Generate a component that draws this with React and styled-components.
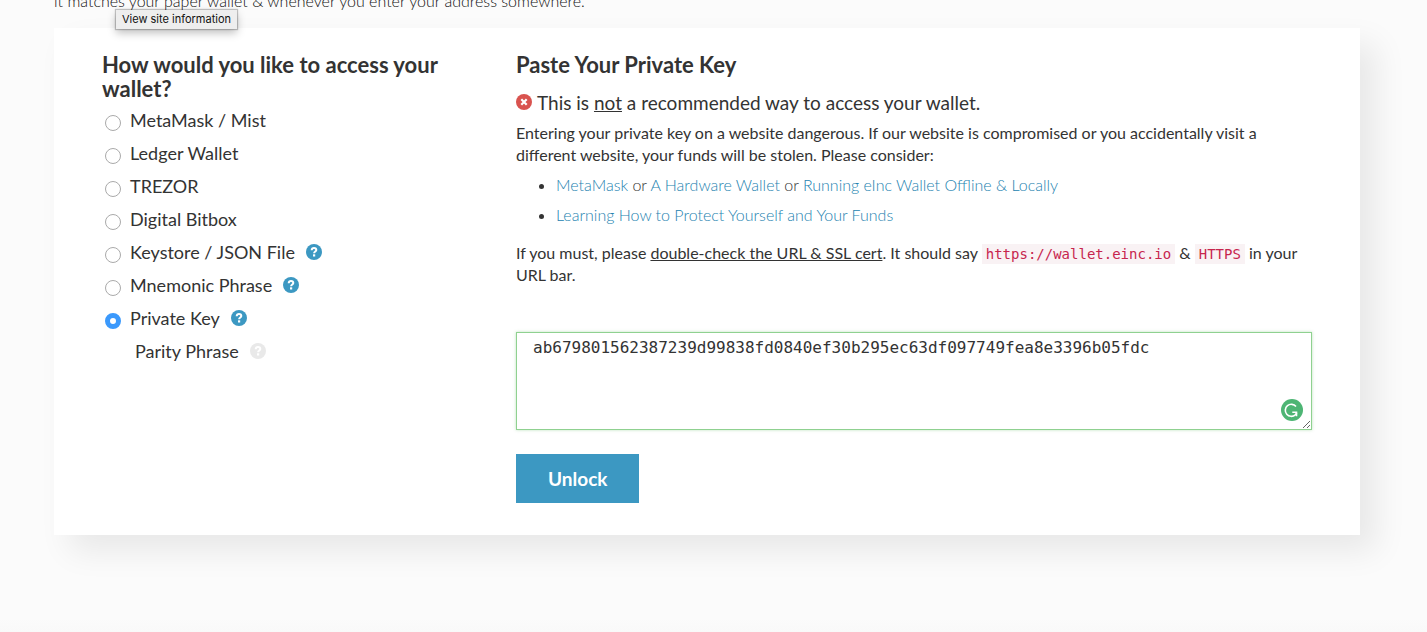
import React, { useState } from "react";
import styled, { createGlobalStyle } from "styled-components";

const GlobalStyle = createGlobalStyle`
  *, *::before, *::after { box-sizing: border-box; }
  body {
    margin: 0;
    background: #fbfbfb;
    color: #333;
    font-family: Lato, "Open Sans", sans-serif;
    font-size: 16px;
    line-height: 22px;
    overflow: hidden;
  }
`;

const Page = styled.div`
  position: relative;
  min-height: 100vh;
  padding: 0 67px 0 54px;
  display: flex;
  flex-direction: column;
  background: linear-gradient(#fbfbfb calc(100% - 14px), #f9f9f9);
`;

const Intro = styled.p`
  margin: -10px 0 16px;
  color: #111;
  font-weight: 300;
`;

const Tooltip = styled.div`
  position: absolute;
  top: 10px;
  left: 116px;
  z-index: 2;
  padding: 0 6px;
  background: #eee;
  box-shadow: 0 0 1px 1px rgba(0, 0, 0, 0.22), 0 4px 8px rgba(0, 0, 0, 0.25);
  color: #111;
  font: 11px/19px Inter, Roboto, sans-serif;
`;

const Card = styled.main`
  display: grid;
  grid-template-columns: 384fr 796fr;
  column-gap: 30px;
  padding: 25px 48px 32px;
  background: #fff;
  box-shadow: 16px 16px 30px rgba(0, 0, 0, 0.08);
`;

const Column = styled.section`
  min-width: 0;
`;

const Title = styled.h2`
  display: block;
  margin: 0 0 3px;
  font-size: 22px;
  line-height: 24px;
  font-weight: 700;
`;

const Options = styled.fieldset`
  margin: 0;
  padding: 0;
  border: 0;
  display: flex;
  flex-direction: column;
`;

const Option = styled.div`
  display: flex;
  align-items: center;
  height: 33px;
  padding-bottom: 2px;
  padding-left: ${(p) => (p.$plain ? "33px" : "3px")};
  font-size: 18px;
  line-height: 24px;
`;

const OptionLabel = styled.label`
  display: flex;
  align-items: center;
  gap: 9px;
`;

const Radio = styled.input`
  appearance: none;
  width: 16px;
  height: 16px;
  margin: 7px 0 0;
  border: 1px solid #aaa;
  border-radius: 50%;
  background: #fff;

  &:checked {
    border: 5px solid #3b99fc;
  }
`;

const HelpLink = styled.a`
  display: flex;
  margin-left: 11px;
  color: ${(p) => (p.$muted ? "#e9e9e9" : "#3c98c2")};
`;

const Warning = styled.h3`
  display: flex;
  align-items: center;
  gap: 5px;
  margin: 0 0 7px;
  padding-top: 11px;
  font-size: 19px;
  line-height: 24px;
  font-weight: 400;

  svg { margin-bottom: 2px; }
`;

const Text = styled.p`
  margin: 0 0 8px;
`;

const Links = styled.ul`
  margin: 0 0 16px;
  padding-left: 40px;
  font-weight: 300;

  li + li { margin-top: 8px; }
`;

const TextLink = styled.a`
  color: #2583b0;
  text-decoration: none;
`;

const Code = styled.code`
  padding: 2px 4px;
  background: #f9f2f4;
  color: #c7254e;
  font: 14px/16px "DejaVu Sans Mono", monospace;
`;

const KeyField = styled.div`
  position: relative;
  display: flex;
  margin: 46px 0 24px;
`;

const KeyInput = styled.textarea`
  flex: 1;
  height: 98px;
  padding: 4px 16px;
  border: 1px solid #8fd190;
  border-radius: 0;
  outline: 0;
  background: #fff;
  box-shadow: 0 0 3px rgba(92, 184, 92, 0.4);
  color: #333;
  font: 16px/22px "DejaVu Sans Mono", monospace;
  resize: vertical;
`;

const Checker = styled.div`
  position: absolute;
  right: 9px;
  bottom: 9px;
  display: flex;
`;

const Button = styled.button`
  height: 49px;
  padding: 0 32px;
  border: 0;
  background: #3c98c2;
  color: #fff;
  font: 700 19px/24px Lato, sans-serif;
`;

const HelpIcon = () => (
  <svg width="16" height="16" viewBox="0 0 16 16" aria-hidden="true">
    <circle cx="8" cy="8" r="8" fill="currentColor" />
    <path d="M5.700 6.200C5.800 4.700 6.800 4.100 8 4.100c1.300 0 2.300.7 2.300 1.900C10.300 7.600 8.100 7.500 8.100 9.300" fill="none" stroke="#fff" strokeWidth="2" />
    <rect x="7" y="10.300" width="2.200" height="2.200" fill="#fff" />
  </svg>
);

const ErrorIcon = () => (
  <svg width="16" height="16" viewBox="0 0 16 16" aria-hidden="true">
    <circle cx="8" cy="8" r="8" fill="#d9534f" />
    <path d="M5.300 5.300l5.400 5.400M10.700 5.300l-5.400 5.400" stroke="#fff" strokeWidth="2.200" />
  </svg>
);

const CheckerIcon = () => (
  <svg width="22" height="22" viewBox="0 0 22 22" aria-hidden="true">
    <circle cx="11" cy="11" r="11" fill="#4db574" />
    <path d="M15 7.600A6 6 0 1 0 14.300 15.800L15.800 14" fill="none" stroke="#fff" strokeWidth="1.600" />
    <path d="M11.300 13.300H15.500V17.300" fill="none" stroke="#fff" strokeWidth="1.600" />
  </svg>
);

const wallets = [
  { id: "metamask", name: "MetaMask / Mist" },
  { id: "ledger", name: "Ledger Wallet" },
  { id: "trezor", name: "TREZOR" },
  { id: "bitbox", name: "Digital Bitbox" },
  { id: "keystore", name: "Keystore / JSON File", help: true },
  { id: "mnemonic", name: "Mnemonic Phrase", help: true },
  { id: "private", name: "Private Key", help: true },
];

export default function App() {
  const [selected, setSelected] = useState("private");
  const [key, setKey] = useState("ab679801562387239d99838fd0840ef30b295ec63df097749fea8e3396b05fdc");

  return (
    <Page>
      <GlobalStyle />
      <Intro>it matches your paper wallet &amp; whenever you enter your address somewhere.</Intro>
      <Tooltip role="tooltip">View site information</Tooltip>
      <Card>
        <Column>
          <Title id="access">How would you like to access your wallet?</Title>
          <Options aria-labelledby="access">
            {wallets.map((w) => (
              <Option key={w.id}>
                <OptionLabel>
                  <Radio
                    type="radio"
                    name="wallet"
                    checked={selected === w.id}
                    onChange={() => setSelected(w.id)}
                  />
                  {w.name}
                </OptionLabel>
                {w.help && (
                  <HelpLink href="#help" aria-label={`Help: ${w.name}`}>
                    <HelpIcon />
                  </HelpLink>
                )}
              </Option>
            ))}
            <Option $plain>
              Parity Phrase
              <HelpLink href="#help" aria-label="Help: Parity Phrase" $muted>
                <HelpIcon />
              </HelpLink>
            </Option>
          </Options>
        </Column>
        <Column>
          <Title as="label" htmlFor="key">Paste Your Private Key</Title>
          <Warning>
            <ErrorIcon />
            <span>This is <u>not</u> a recommended way to access your wallet.</span>
          </Warning>
          <Text>
            Entering your private key on a website dangerous. If our website is compromised or you
            accidentally visit a different website, your funds will be stolen. Please consider:
          </Text>
          <Links>
            <li>
              <TextLink href="#metamask">MetaMask</TextLink> or{" "}
              <TextLink href="#hardware">A Hardware Wallet</TextLink> or{" "}
              <TextLink href="#offline">Running eInc Wallet Offline &amp; Locally</TextLink>
            </li>
            <li>
              <TextLink href="#protect">Learning How to Protect Yourself and Your Funds</TextLink>
            </li>
          </Links>
          <Text>
            If you must, please <u>double-check the URL &amp; SSL cert</u>. It should say{" "}
            <Code>https://wallet.einc.io</Code> &amp; <Code>HTTPS</Code> in your URL bar.
          </Text>
          <KeyField>
            <KeyInput
              id="key"
              spellCheck={false}
              value={key}
              onChange={(e) => setKey(e.target.value)}
            />
            <Checker><CheckerIcon /></Checker>
          </KeyField>
          <Button type="button">Unlock</Button>
        </Column>
      </Card>
    </Page>
  );
}
